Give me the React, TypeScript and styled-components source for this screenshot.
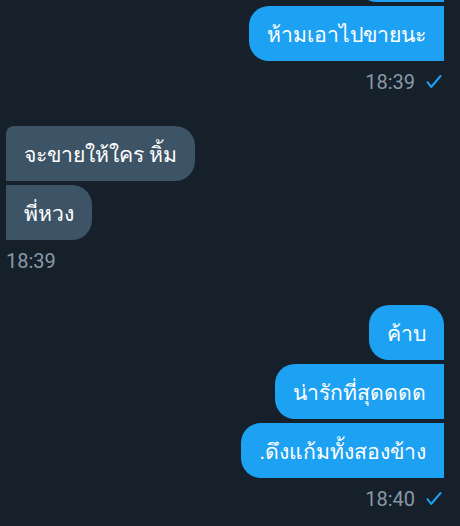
import React from "react";
import styled, { createGlobalStyle } from "styled-components";

type Side = "in" | "out";
type Pos = "first" | "middle" | "last";

interface Message {
  text: string;
  pos: Pos;
  width?: number;
}

interface Group {
  side: Side;
  time: string;
  messages: Message[];
  read?: boolean;
}

// the first bubble is scrolled off the top, only its bottom edge shows
const groups: Group[] = [
  {
    side: "out",
    time: "18:39",
    read: true,
    messages: [
      { text: "\u00a0", pos: "first", width: 87 },
      { text: "ห้ามเอาไปขายนะ", pos: "last" },
    ],
  },
  {
    side: "in",
    time: "18:39",
    messages: [
      { text: "จะขายให้ใคร หิ้ม", pos: "first" },
      { text: "พี่หวง", pos: "last" },
    ],
  },
  {
    side: "out",
    time: "18:40",
    read: true,
    messages: [
      { text: "ค้าบ", pos: "first" },
      { text: "น่ารักที่สุดดดด", pos: "middle" },
      { text: ".ดึงแก้มทั้งสองข้าง", pos: "last" },
    ],
  },
];

const radius = (side: Side, pos: Pos) => {
  if (side === "out") {
    return pos === "first" ? "20px 20px 0 20px" : "20px 0 0 20px";
  }
  return pos === "first" ? "8px 20px 20px 0" : "0 20px 20px 0";
};

const Check = () => (
  <svg width="16" height="14" viewBox="0 0 16 14" fill="none">
    <path
      d="M1.5 7.2 L5.2 12 L14.5 1"
      stroke="#1da1f2"
      strokeWidth="2"
      strokeLinecap="round"
      strokeLinejoin="round"
    />
  </svg>
);

const App = () => {
  return (
    <>
      <GlobalStyle />
      <StyledThread>
        {groups.map((group, i) => (
          <StyledGroup key={i} side={group.side}>
            {group.messages.map((msg, j) => (
              <StyledBubble
                key={j}
                side={group.side}
                pos={msg.pos}
                style={msg.width ? { width: msg.width } : undefined}
              >
                {msg.text}
              </StyledBubble>
            ))}
            <StyledMeta>
              <span>{group.time}</span>
              {group.read && <Check />}
            </StyledMeta>
          </StyledGroup>
        ))}
      </StyledThread>
    </>
  );
};

const GlobalStyle = createGlobalStyle`
  html, body {
    margin: 0;
    padding: 0;
    background-color: #15202b;
    overflow: hidden;
  }
  body {
    font-family: Roboto, "Noto Sans", sans-serif;
  }
`;

const StyledThread = styled.div`
  width: 460px;
  height: 526px;
  box-sizing: border-box;
  padding: 0 16px 0 6px;
  display: flex;
  flex-direction: column;
  gap: 31px;
  overflow: hidden;

  & > :first-child {
    margin-top: -53px;
  }
`;

const StyledGroup = styled.div<{ side: Side }>`
  display: flex;
  flex-direction: column;
  align-items: ${(p) => (p.side === "out" ? "flex-end" : "flex-start")};
  gap: 4px;
`;

const StyledBubble = styled.div<{ side: Side; pos: Pos }>`
  box-sizing: border-box;
  height: 55px;
  padding: 14px 18px 11px;
  font-size: 21.2px;
  line-height: 30px;
  color: #ffffff;
  white-space: nowrap;
  background-color: ${(p) => (p.side === "out" ? "#1da1f2" : "#3d5466")};
  border-radius: ${(p) => radius(p.side, p.pos)};
`;

const StyledMeta = styled.div`
  margin-top: 4px;
  display: flex;
  align-items: center;
  gap: 11px;
  font-size: 20px;
  line-height: 26px;
  color: #8899a6;
  padding-right: 2px;
`;

export default App;
